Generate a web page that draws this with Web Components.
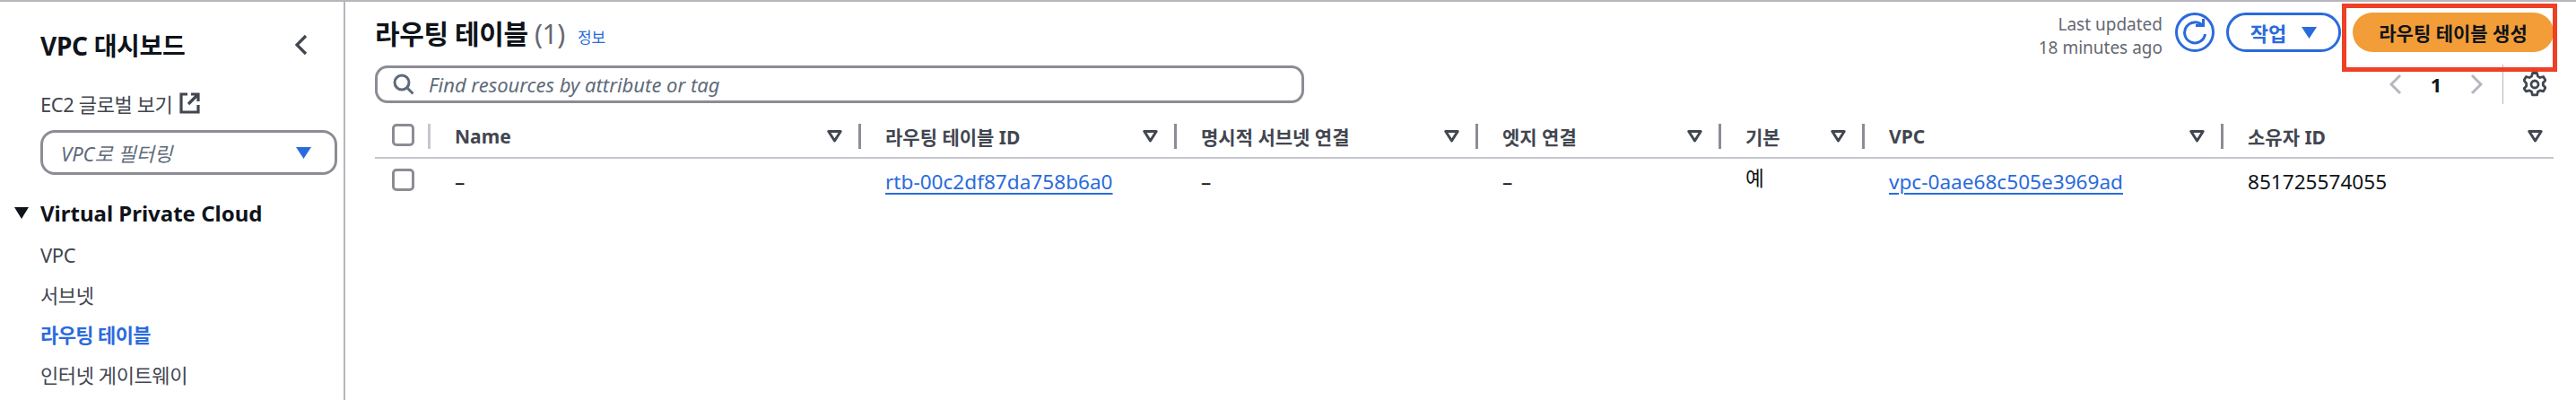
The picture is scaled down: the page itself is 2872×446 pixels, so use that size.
<!DOCTYPE html>
<html lang="ko">
<head>
<meta charset="utf-8">
<title>라우팅 테이블</title>
<style>
    html, body { margin: 0; background: #fff; }
    body { font-family: "Noto Sans", "Noto Sans CJK KR", sans-serif; overflow: hidden; }
</style>
</head>
<body>
<app-shell>
    <side-nav slot="nav"></side-nav>
    <route-page></route-page>
</app-shell>

<script>
const FONT = '"Noto Sans", "Noto Sans CJK KR", sans-serif';

class AppShell extends HTMLElement {
    constructor() {
        super();
        this.attachShadow({ mode: 'open' });
    }

    connectedCallback() {
        this.shadowRoot.innerHTML = `
        <style>
            :host {
                display: flex;
                width: 2872px;
                height: 446px;
                box-sizing: border-box;
                border-top: 2px solid #b6b6bd;
                overflow: hidden;
                font-family: ${FONT};
            }
        </style>
        <slot name="nav"></slot>
        <slot></slot>
        `;
    }
}

class NavLink extends HTMLElement {
    constructor() {
        super();
        this.attachShadow({ mode: 'open' });
    }

    connectedCallback() {
        this.shadowRoot.innerHTML = `
        <style>
            :host {
                display: block;
                height: 44.5px;
                line-height: 44px;
                font-size: 22px;
                letter-spacing: -0.4px;
                color: #424650;
                white-space: nowrap;
            }
            :host([active]) {
                color: #2a6bdc;
                font-weight: 700;
                letter-spacing: -0.6px;
            }
        </style>
        <slot></slot>
        `;
    }
}

class SideNav extends HTMLElement {
    constructor() {
        super();
        this.attachShadow({ mode: 'open' });
    }

    connectedCallback() {
        this.shadowRoot.innerHTML = `
        <style>
            :host {
                display: block;
                flex: none;
                width: 385px;
                box-sizing: border-box;
                border-right: 2px solid #b6b6bd;
                padding: 28px 8px 0 45px;
            }
            .head {
                display: flex;
                align-items: center;
                justify-content: space-between;
                height: 40px;
                padding-right: 31px;
            }
            h2 {
                margin: 0;
                font-size: 28px;
                font-weight: 700;
                color: #0f141a;
                letter-spacing: -0.3px;
            }
            .global {
                display: flex;
                align-items: center;
                gap: 8px;
                margin-top: 29px;
                height: 32px;
                font-size: 22px;
                letter-spacing: -0.4px;
                color: #424650;
            }
            .filter {
                display: flex;
                align-items: center;
                justify-content: space-between;
                box-sizing: border-box;
                width: 331px;
                height: 50px;
                margin-top: 14px;
                padding: 0 26px 0 20px;
                border: 3px solid #8c8c94;
                border-radius: 16px;
                font-size: 22px;
                font-style: italic;
                color: #5f6b7a;
            }
            .tree {
                display: flex;
                align-items: center;
                margin: 22px 0 0 -29px;
                height: 40px;
                gap: 13px;
                font-size: 24px;
                font-weight: 700;
                color: #0f141a;
                white-space: nowrap;
            }
            .links { margin-top: 5px; }
            svg { display: block; flex: none; }
        </style>
        <div class="head">
            <h2>VPC 대시보드</h2>
            <svg width="16" height="24" viewBox="0 0 16 24"><path d="M13 2 3 12l10 10" fill="none" stroke="#424650" stroke-width="3.2"/></svg>
        </div>
        <div class="global">EC2 글로벌 보기
            <svg width="23" height="24" viewBox="0 0 23 24"><path d="M9 2H2v20h19v-8M13 2h8v8M21 2 10 13" fill="none" stroke="#424650" stroke-width="3.2"/></svg>
        </div>
        <div class="filter">VPC로 필터링
            <svg width="17" height="13" viewBox="0 0 17 13"><path d="M0 0h17L8.5 13z" fill="#2a6bdc"/></svg>
        </div>
        <div class="tree">
            <svg width="16" height="13" viewBox="0 0 16 13"><path d="M0 0h16L8 13z" fill="#0f141a"/></svg>
            Virtual Private Cloud
        </div>
        <div class="links">
            <nav-link>VPC</nav-link>
            <nav-link>서브넷</nav-link>
            <nav-link active>라우팅 테이블</nav-link>
            <nav-link>인터넷 게이트웨이</nav-link>
        </div>
        `;
    }
}

class PageHeader extends HTMLElement {
    constructor() {
        super();
        this.attachShadow({ mode: 'open' });
    }

    connectedCallback() {
        this.shadowRoot.innerHTML = `
        <style>
            :host {
                display: flex;
                align-items: center;
                position: relative;
                height: 44px;
            }
            h1 {
                margin: 0;
                font-size: 30px;
                font-weight: 700;
                color: #0f141a;
                white-space: nowrap;
                letter-spacing: -0.4px;
            }
            h1 span { font-weight: 400; color: #656871; }
            .info {
                margin: 8px auto 0 14px;
                font-size: 17px;
                color: #2a6bdc;
            }
            .updated {
                text-align: right;
                font-size: 19px;
                line-height: 26px;
                color: #656871;
                margin: 8px 14px 0 0;
            }
            .refresh, .actions, .create {
                box-sizing: border-box;
                height: 44px;
                display: flex;
                align-items: center;
                justify-content: center;
                border-radius: 22px;
            }
            .refresh {
                width: 44px;
                border: 3px solid #2a6bdc;
                margin-right: 13px;
            }
            .actions {
                width: 128px;
                border: 3px solid #2a6bdc;
                gap: 17px;
                font-size: 22px;
                font-weight: 700;
                color: #2a6bdc;
                margin-right: 13px;
            }
            .create {
                width: 224px;
                background: #f29d38;
                font-size: 21px;
                font-weight: 700;
                color: #0f141a;
                white-space: nowrap;
            }
            /* 스크린샷에 표시된 빨간 강조 상자 */
            .mark {
                position: absolute;
                right: -4px;
                top: -10px;
                width: 240px;
                height: 76px;
                box-sizing: border-box;
                border: 5px solid #ee4024;
            }
            svg { display: block; }
        </style>
        <h1>라우팅 테이블 <span>(1)</span></h1>
        <span class="info">정보</span>
        <div class="updated">Last updated<br>18 minutes ago</div>
        <div class="refresh">
            <svg width="28" height="30" viewBox="0 0 28 30"><path d="M22.5 7.5A11.5 11.5 0 1 0 25.5 17" fill="none" stroke="#2a6bdc" stroke-width="3"/><path d="M15 7.5h8.5V0" fill="none" stroke="#2a6bdc" stroke-width="3"/></svg>
        </div>
        <div class="actions">작업
            <svg width="17" height="13" viewBox="0 0 17 13"><path d="M0 0h17L8.5 13z" fill="#2a6bdc"/></svg>
        </div>
        <div class="create">라우팅 테이블 생성</div>
        <div class="mark"></div>
        `;
    }
}

class PageTools extends HTMLElement {
    constructor() {
        super();
        this.attachShadow({ mode: 'open' });
    }

    connectedCallback() {
        this.shadowRoot.innerHTML = `
        <style>
            :host {
                display: flex;
                align-items: center;
                height: 44px;
                margin-top: 14px;
            }
            .search {
                display: flex;
                align-items: center;
                gap: 16px;
                box-sizing: border-box;
                width: 1036px;
                height: 42px;
                padding-left: 17px;
                border: 3px solid #8c8c94;
                border-radius: 14px;
                font-size: 22px;
                font-style: italic;
                color: #5f6b7a;
                margin-right: auto;
            }
            .pager {
                display: flex;
                align-items: center;
                height: 44px;
                padding-right: 8px;
                color: #0f141a;
                font-size: 22px;
                font-weight: 700;
            }
            .num { width: 76px; text-align: center; }
            .rule {
                width: 1px;
                height: 44px;
                background: #b6b6bd;
                margin: 0 22px;
            }
            svg { display: block; flex: none; }
        </style>
        <div class="search">
            <svg width="24" height="24" viewBox="0 0 24 24"><circle cx="10" cy="10" r="8" fill="none" stroke="#5f6b7a" stroke-width="3"/><path d="m15.5 15.5 7 7" stroke="#5f6b7a" stroke-width="3"/></svg>
            Find resources by attribute or tag
        </div>
        <div class="pager">
            <svg width="14" height="24" viewBox="0 0 14 24"><path d="M12 2 2 12l10 10" fill="none" stroke="#b6b6bd" stroke-width="3"/></svg>
            <span class="num">1</span>
            <svg width="14" height="24" viewBox="0 0 14 24"><path d="m2 2 10 10L2 22" fill="none" stroke="#b6b6bd" stroke-width="3"/></svg>
            <span class="rule"></span>
            <svg width="26" height="28" viewBox="0 0 26 28"><path d="M10.5 1.5h5l1 3.6 2.4 1.4 3.7-1 2.4 4.1-2.7 2.7v2.8l2.7 2.7-2.4 4.1-3.7-1-2.4 1.4-1 3.6h-5l-1-3.6-2.4-1.4-3.7 1L1 18.7l2.7-2.7v-2.8L1 9.6l2.4-4.1 3.7 1 2.4-1.4z" fill="none" stroke="#424650" stroke-width="2.8" stroke-linejoin="round"/><circle cx="13" cy="14" r="4" fill="none" stroke="#424650" stroke-width="2.8"/></svg>
        </div>
        `;
    }
}

class TableHead extends HTMLElement {
    static get observedAttributes() {
        return ['label'];
    }

    constructor() {
        super();
        this.attachShadow({ mode: 'open' });
    }

    attributeChangedCallback() {
        this.render();
    }

    connectedCallback() {
        this.render();
    }

    render() {
        const label = this.getAttribute('label') || '';
        this.shadowRoot.innerHTML = `
        <style>
            :host {
                display: flex;
                align-items: center;
                justify-content: space-between;
                box-sizing: border-box;
                height: 28px;
                padding: 0 18px 0 27px;
                font-size: 21px;
                font-weight: 700;
                color: #424650;
                white-space: nowrap;
                border-right: 3px solid #8c8c94;
            }
            :host(:last-of-type) { border-right: 0; padding-right: 12px; }
            svg { display: block; flex: none; }
        </style>
        <span>${label}</span>
        <svg width="17" height="14" viewBox="0 0 17 14"><path d="M1.8 1.5h13.4L8.5 12z" fill="none" stroke="#424650" stroke-width="3" stroke-linejoin="round"/></svg>
        `;
    }
}

class TableCheck extends HTMLElement {
    constructor() {
        super();
        this.attachShadow({ mode: 'open' });
    }

    connectedCallback() {
        this.shadowRoot.innerHTML = `
        <style>
            :host {
                display: block;
                box-sizing: border-box;
                width: 25px;
                height: 25px;
                border: 3px solid #8c8c94;
                border-radius: 5px;
                margin-left: 19px;
            }
        </style>
        `;
    }
}

class RouteTable extends HTMLElement {
    constructor() {
        super();
        this.attachShadow({ mode: 'open' });
    }

    connectedCallback() {
        const heads = ['Name', '라우팅 테이블 ID', '명시적 서브넷 연결', '엣지 연결', '기본', 'VPC', '소유자 ID'];
        this.shadowRoot.innerHTML = `
        <style>
            :host {
                display: grid;
                grid-template-columns: 62px 480px 352px 336px 271px 160px 400px 368px;
                margin-top: 22px;
            }
            .sel {
                height: 28px;
                box-sizing: border-box;
                border-right: 3px solid #c6c6cd;
            }
            .rule {
                grid-column: 1 / -1;
                height: 2px;
                margin-top: 9px;
                background: #c6c6cd;
            }
            .cell {
                height: 50px;
                display: flex;
                align-items: center;
                padding: 0 0 0 27px;
                box-sizing: border-box;
                font-size: 22.6px;
                color: #0f141a;
                white-space: nowrap;
            }
            .mark { padding: 11px 0 0; align-items: flex-start; }
            a {
                color: #2a6bdc;
                text-decoration: underline;
                text-underline-offset: 4px;
                text-decoration-thickness: 2px;
            }
            .up { padding-bottom: 10px; }
        </style>
        <div class="sel"><table-check></table-check></div>
        ${heads.map(h => `<table-head label="${h}"></table-head>`).join('')}
        <div class="rule"></div>
        <div class="cell mark"><table-check></table-check></div>
        <div class="cell">–</div>
        <div class="cell"><a>rtb-00c2df87da758b6a0</a></div>
        <div class="cell">–</div>
        <div class="cell">–</div>
        <div class="cell up">예</div>
        <div class="cell"><a>vpc-0aae68c505e3969ad</a></div>
        <div class="cell">851725574055</div>
        `;
    }
}

class RoutePage extends HTMLElement {
    constructor() {
        super();
        this.attachShadow({ mode: 'open' });
    }

    connectedCallback() {
        this.shadowRoot.innerHTML = `
        <style>
            :host {
                display: block;
                flex: 1;
                min-width: 0;
                padding: 12px 25px 0 33px;
            }
        </style>
        <page-header></page-header>
        <page-tools></page-tools>
        <route-table></route-table>
        `;
    }
}

customElements.define('app-shell', AppShell);
customElements.define('nav-link', NavLink);
customElements.define('side-nav', SideNav);
customElements.define('page-header', PageHeader);
customElements.define('page-tools', PageTools);
customElements.define('table-head', TableHead);
customElements.define('table-check', TableCheck);
customElements.define('route-table', RouteTable);
customElements.define('route-page', RoutePage);
</script>
</body>
</html>
